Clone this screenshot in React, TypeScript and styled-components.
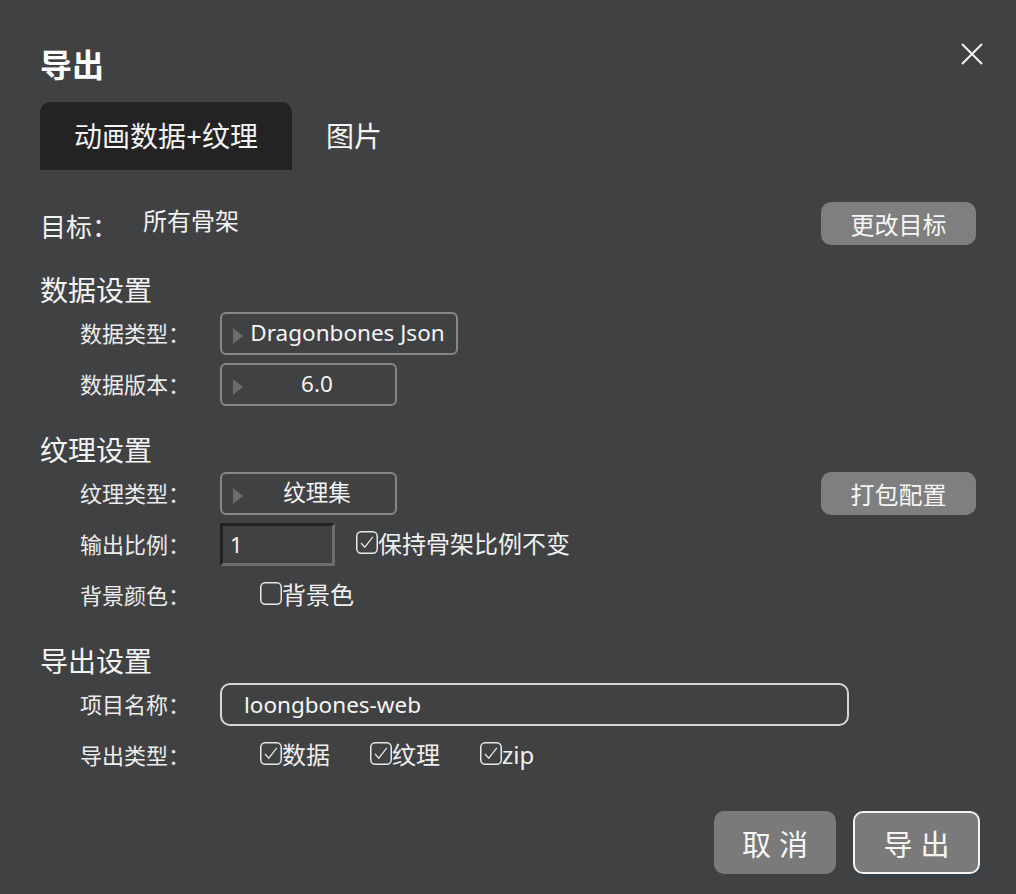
import React, { useState } from 'react';
import styled, { createGlobalStyle } from 'styled-components';

const GlobalStyle = createGlobalStyle`
  html, body {
    margin: 0;
    padding: 0;
    background: #404143;
  }
  body {
    font-family: "Noto Sans", "Noto Sans CJK SC", sans-serif;
    color: #f2f2f2;
  }
  * {
    box-sizing: border-box;
  }
`;

interface CheckProps {
  label: string;
  checked: boolean;
  onToggle: () => void;
}

const Check: React.FC<CheckProps> = ({ label, checked, onToggle }) => (
  <CheckLabel onClick={onToggle}>
    <CheckBox>
      <svg width="22" height="23" viewBox="0 0 22 23">
        <rect x="0.75" y="0.75" width="20.5" height="21.5" rx="4.5" fill="none" stroke="#e8e8e8" strokeWidth="1.5" />
        {checked && <path d="M5 12 L8.8 16.2 L16.8 5.8" fill="none" stroke="#e8e8e8" strokeWidth="1.2" />}
      </svg>
    </CheckBox>
    {label}
  </CheckLabel>
);

const App: React.FC = () => {
  const [tab, setTab] = useState<number>(0);
  const [keepScale, setKeepScale] = useState(true);
  const [bgColor, setBgColor] = useState(false);
  const [types, setTypes] = useState({ data: true, texture: true, zip: true });

  return (
    <Dialog>
      <GlobalStyle />
      <Header>
        <Title>导出</Title>
        <CloseButton aria-label="关闭">
          <svg width="24" height="24" viewBox="0 0 24 24">
            <path d="M2 2 L22 22 M22 2 L2 22" stroke="#f4f4f4" strokeWidth="2" fill="none" />
          </svg>
        </CloseButton>
      </Header>

      <Tabs>
        <Tab $active={tab === 0} onClick={() => setTab(0)}>动画数据+纹理</Tab>
        <Tab $active={tab === 1} onClick={() => setTab(1)}>图片</Tab>
      </Tabs>

      <TargetRow>
        <TargetLabel>目标：</TargetLabel>
        <TargetValue>所有骨架</TargetValue>
        <GrayButton>更改目标</GrayButton>
      </TargetRow>

      <Section>
        <SectionTitle>数据设置</SectionTitle>
        <FieldList>
          <Field>
            <FieldLabel>数据类型：</FieldLabel>
            <Select $width={238}>
              <Arrow />
              <SelectText>Dragonbones Json</SelectText>
            </Select>
          </Field>
          <Field>
            <FieldLabel>数据版本：</FieldLabel>
            <Select $width={177}>
              <Arrow />
              <SelectText>6.0</SelectText>
            </Select>
          </Field>
        </FieldList>
      </Section>

      <Section>
        <SectionTitle>纹理设置</SectionTitle>
        <FieldList>
          <Field>
            <FieldLabel>纹理类型：</FieldLabel>
            <Select $width={177}>
              <Arrow />
              <SelectText>纹理集</SelectText>
            </Select>
            <GrayButton>打包配置</GrayButton>
          </Field>
          <Field>
            <FieldLabel>输出比例：</FieldLabel>
            <ScaleInput defaultValue="1" />
            <ScaleCheck>
              <Check label="保持骨架比例不变" checked={keepScale} onToggle={() => setKeepScale(!keepScale)} />
            </ScaleCheck>
          </Field>
          <Field>
            <FieldLabel>背景颜色：</FieldLabel>
            <CheckGroup>
              <Check label="背景色" checked={bgColor} onToggle={() => setBgColor(!bgColor)} />
            </CheckGroup>
          </Field>
        </FieldList>
      </Section>

      <Section>
        <SectionTitle>导出设置</SectionTitle>
        <FieldList>
          <Field>
            <FieldLabel>项目名称：</FieldLabel>
            <NameInput defaultValue="loongbones-web" />
          </Field>
          <Field>
            <FieldLabel>导出类型：</FieldLabel>
            <CheckGroup>
              <Check label="数据" checked={types.data} onToggle={() => setTypes({ ...types, data: !types.data })} />
              <Check label="纹理" checked={types.texture} onToggle={() => setTypes({ ...types, texture: !types.texture })} />
              <Check label="zip" checked={types.zip} onToggle={() => setTypes({ ...types, zip: !types.zip })} />
            </CheckGroup>
          </Field>
        </FieldList>
      </Section>

      <Footer>
        <FooterButton $width={122}>取消</FooterButton>
        <FooterButton $width={127} $primary>导出</FooterButton>
      </Footer>
    </Dialog>
  );
};

const Dialog = styled.div`
  width: 1016px;
  height: 894px;
  padding: 45px 40px 0 40px;
  display: flex;
  flex-direction: column;
  background: #404143;
`;

const Header = styled.div`
  display: flex;
  justify-content: space-between;
  align-items: flex-start;
`;

const Title = styled.h1`
  margin: 0;
  font-size: 32px;
  line-height: 40px;
  font-weight: 700;
  color: #ffffff;
`;

const CloseButton = styled.button`
  width: 24px;
  height: 24px;
  padding: 0;
  margin: -3px -8px 0 0;
  border: none;
  background: none;
  cursor: pointer;
  display: flex;
`;

const Tabs = styled.div`
  display: flex;
  height: 68px;
  margin-top: 17px;
`;

const Tab = styled.div<{ $active: boolean }>`
  display: flex;
  align-items: center;
  padding: 0 34px;
  font-size: 28px;
  line-height: 34px;
  color: #f4f4f4;
  background: ${(props) => (props.$active ? '#232323' : 'transparent')};
  border-radius: 10px 10px 0 0;
  cursor: pointer;
`;

const TargetRow = styled.div`
  display: flex;
  align-items: center;
  height: 43px;
  margin-top: 32px;
`;

const TargetLabel = styled.span`
  width: 103px;
  font-size: 26px;
  line-height: 32px;
  padding-top: 6px;
`;

const TargetValue = styled.span`
  font-size: 24px;
  line-height: 30px;
  padding-bottom: 6px;
`;

const GrayButton = styled.button`
  margin-left: auto;
  width: 155px;
  height: 43px;
  border: none;
  border-radius: 10px;
  background: #7f7f7f;
  color: #f6f6f6;
  font-family: inherit;
  font-size: 24px;
  padding: 0;
  cursor: pointer;
`;

const Section = styled.section`
  display: flex;
  flex-direction: column;
  margin-top: 28px;
`;

const SectionTitle = styled.h2`
  margin: 0;
  font-size: 28px;
  line-height: 34px;
  font-weight: 400;
  color: #f4f4f4;
`;

const FieldList = styled.div`
  display: flex;
  flex-direction: column;
  gap: 9px;
  margin-top: 5px;
  padding-left: 40px;
`;

const Field = styled.div`
  display: flex;
  align-items: center;
  height: 42px;
`;

const FieldLabel = styled.span`
  width: 140px;
  flex-shrink: 0;
  font-size: 22px;
  line-height: 28px;
  color: #ececec;
`;

const Select = styled.div<{ $width: number }>`
  display: flex;
  align-items: center;
  width: ${(props) => props.$width}px;
  height: 43px;
  padding: 0 10px 0 11px;
  border: 2px solid #8a8484;
  border-radius: 6px;
  cursor: pointer;
`;

const Arrow = styled.span`
  width: 0;
  height: 0;
  margin-top: 5px;
  border-left: 10px solid #6b6b6b;
  border-top: 8px solid transparent;
  border-bottom: 8px solid transparent;
`;

const SelectText = styled.span`
  flex: 1;
  padding-left: 6px;
  text-align: center;
  white-space: nowrap;
  font-size: 22.5px;
  line-height: 28px;
  color: #f4f4f4;
`;

const ScaleInput = styled.input`
  width: 115px;
  height: 43px;
  padding: 0 0 0 7px;
  border: 3px solid;
  border-color: #222222 #6e6e6e #6e6e6e #222222;
  background: transparent;
  color: #f4f4f4;
  font-family: inherit;
  font-size: 22px;
  outline: none;
`;

const ScaleCheck = styled.div`
  margin-left: 21px;
`;

const CheckGroup = styled.div`
  display: flex;
  align-items: center;
  gap: 40px;
  margin-left: 40px;
`;

const CheckLabel = styled.label`
  display: inline-flex;
  align-items: center;
  font-size: 24px;
  line-height: 30px;
  color: #f0f0f0;
  cursor: pointer;
`;

const CheckBox = styled.span`
  display: flex;
  margin: -3px 0 0 0;
`;

const NameInput = styled.input`
  width: 629px;
  height: 43px;
  padding: 0 0 0 22px;
  border: 2px solid #d6d6d6;
  border-radius: 10px;
  background: transparent;
  color: #f4f4f4;
  font-family: inherit;
  font-size: 22.5px;
  outline: none;
`;

const Footer = styled.div`
  display: flex;
  justify-content: flex-end;
  gap: 17px;
  margin: 35px -4px 0 0;
`;

const FooterButton = styled.button<{ $width: number; $primary?: boolean }>`
  width: ${(props) => props.$width}px;
  height: 63px;
  padding: 0 0 0 8px;
  border: ${(props) => (props.$primary ? '2px solid #f2f2f2' : 'none')};
  border-radius: 10px;
  background: #7a7a7a;
  box-shadow: ${(props) => (props.$primary ? '0 3px 1px #36414c' : 'none')};
  color: #f6f6f6;
  font-family: inherit;
  font-size: 29px;
  letter-spacing: 8px;
  cursor: pointer;
`;

export default App;
